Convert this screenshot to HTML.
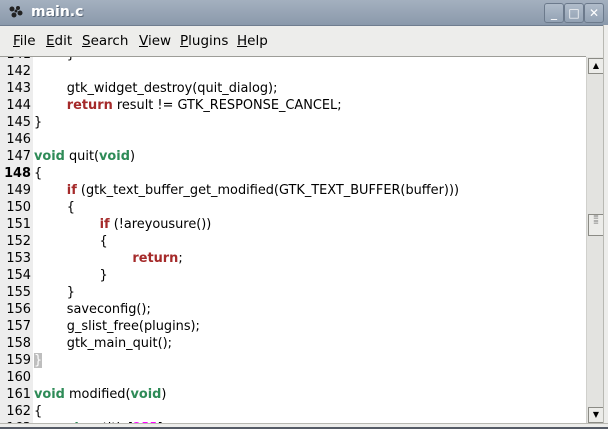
<!DOCTYPE html><html><head><style>
body{margin:0;width:608px;height:429px;overflow:hidden;background:#ededeb;font-family:"DejaVu Sans","Liberation Sans",sans-serif;position:relative}
.title{position:absolute;left:0;top:0;width:608px;height:25px;background:linear-gradient(#a4b0bf,#8a99ab);border-bottom:1px solid #6f7d8f}
.title .t{position:absolute;left:31px;top:4px;color:#fff;font-weight:bold;font-size:14px;text-shadow:1px 1px 0 #5d6a7a}
.btn{position:absolute;top:3px;width:18px;height:18px;border:1px solid #6c7a8c;border-radius:3px;background:linear-gradient(#b0bcca,#93a2b4);color:#fff;font-size:12px;text-align:center;line-height:18px}
.menu{position:absolute;top:26px;left:0;width:604px;height:30px;font-size:13.5px;color:#000}
.menu span{position:absolute;top:7px}
.menu u{text-decoration:underline}
.edit{position:absolute;left:0;top:56px;width:586px;height:367px;border-top:1px solid #9d9d98;background:#fff;overflow:hidden}
.gut{position:absolute;left:0;top:0;width:33px;height:367px;background:#ededed}
.ln{position:absolute;left:0;height:17px;font-size:12.9px;line-height:17px;white-space:pre;color:#000}
.ln b.n{display:inline-block;width:31px;text-align:right;font-weight:normal;margin-right:3px}
.k{color:#a52a2a;font-weight:bold}.ty{color:#2e8b57;font-weight:bold}.m{color:#f0f}
.sb{position:absolute;left:586px;top:57px;width:17px;height:366px;background:#e3e3e0;border-left:1px solid #d0d0cc}
.arr{position:absolute;left:1px;width:14px;height:14px;border:1px solid #8b8b85;background:#ecece9;font-size:8px;text-align:center;line-height:14px}
.rb{position:absolute;right:0;top:25px;width:4px;height:404px;background:#ededeb;border-left:1px solid #b8b8b2}
</style></head><body>
<div class="title">
<svg style="position:absolute;left:8px;top:5px" width="16" height="14" viewBox="0 0 16 14"><g fill="#222"><circle cx="4" cy="4" r="2.5"/><circle cx="10" cy="3" r="2"/><circle cx="12" cy="8" r="2.5"/><circle cx="6" cy="10" r="2.5"/><circle cx="8" cy="6" r="1.5"/></g></svg>
<span class="t">main.c</span>
<div class="btn" style="left:544px">_</div><div class="btn" style="left:564px">□</div><div class="btn" style="left:584px">✕</div>
</div>
<div class="menu">
<span style="left:13px"><u>F</u>ile</span><span style="left:46px"><u>E</u>dit</span><span style="left:82px"><u>S</u>earch</span><span style="left:139px"><u>V</u>iew</span><span style="left:180px"><u>P</u>lugins</span><span style="left:237px"><u>H</u>elp</span>
</div>
<div class="edit">
<div class="gut"></div>
<div class="ln" style="top:-11px"><b class="n">141</b>        }</div>
<div class="ln" style="top:6px"><b class="n">142</b></div>
<div class="ln" style="top:23px"><b class="n">143</b>        gtk_widget_destroy(quit_dialog);</div>
<div class="ln" style="top:40px"><b class="n">144</b>        <span class="k">return</span> result != GTK_RESPONSE_CANCEL;</div>
<div class="ln" style="top:57px"><b class="n">145</b>}</div>
<div class="ln" style="top:74px"><b class="n">146</b></div>
<div class="ln" style="top:91px"><b class="n">147</b><span class="ty">void</span> quit(<span class="ty">void</span>)</div>
<div class="ln" style="top:108px"><b class="n" style="font-weight:bold">148</b>{</div>
<div class="ln" style="top:125px"><b class="n">149</b>        <span class="k">if</span> (gtk_text_buffer_get_modified(GTK_TEXT_BUFFER(buffer)))</div>
<div class="ln" style="top:142px"><b class="n">150</b>        {</div>
<div class="ln" style="top:159px"><b class="n">151</b>                <span class="k">if</span> (!areyousure())</div>
<div class="ln" style="top:176px"><b class="n">152</b>                {</div>
<div class="ln" style="top:193px"><b class="n">153</b>                        <span class="k">return</span>;</div>
<div class="ln" style="top:210px"><b class="n">154</b>                }</div>
<div class="ln" style="top:227px"><b class="n">155</b>        }</div>
<div class="ln" style="top:244px"><b class="n">156</b>        saveconfig();</div>
<div class="ln" style="top:261px"><b class="n">157</b>        g_slist_free(plugins);</div>
<div class="ln" style="top:278px"><b class="n">158</b>        gtk_main_quit();</div>
<div class="ln" style="top:295px"><b class="n">159</b><span style="background:#bebebe;color:#fff">}</span></div>
<div class="ln" style="top:312px"><b class="n">160</b></div>
<div class="ln" style="top:329px"><b class="n">161</b><span class="ty">void</span> modified(<span class="ty">void</span>)</div>
<div class="ln" style="top:346px"><b class="n">162</b>{</div>
<div class="ln" style="top:363px"><b class="n">163</b>        <span class="ty">char</span> title[<span class="m">255</span>];</div>
</div>
<div class="sb">
<div class="arr" style="top:1px">▲</div>
<div class="arr" style="top:157px;height:20px;line-height:5px;font-size:7px;color:#777">≡<br>≡</div>
<div class="arr" style="top:350px">▼</div>
</div>
<div class="rb"></div>
<div style="position:absolute;left:0;top:423px;width:608px;height:5px;background:#ededeb;border-top:1px solid #b8b8b2"></div>
<div style="position:absolute;left:0;top:427px;width:608px;height:2px;background:#555b66"></div>
</body></html>
